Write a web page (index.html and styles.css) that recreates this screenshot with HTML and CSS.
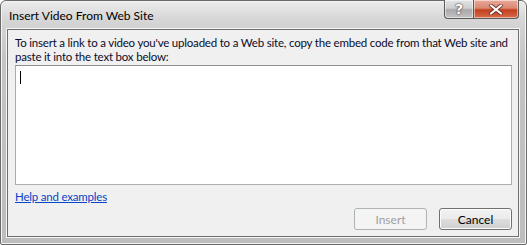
FILE: index.html
```html
<!DOCTYPE html>
<html>
<head>
	<title>Insert Video From Web Site</title>
	<link rel="stylesheet" href="styles.css">
</head>
<body>
   <div class="window">
      <div class="titlebar">
         <div class="title">Insert Video From Web Site</div>
         <div class="caption">
            <div class="cap help">?</div>
            <div class="cap close">
               <svg width="14" height="11" viewBox="0 0 14 11">
                  <path d="M2 1.5 L12 9.5 M12 1.5 L2 9.5" stroke="#6b2a1e" stroke-width="3.6" stroke-linecap="round"/>
                  <path d="M2 1.5 L12 9.5 M12 1.5 L2 9.5" stroke="#fff" stroke-width="2.2" stroke-linecap="round"/>
               </svg>
            </div>
         </div>
      </div>
      <div class="client">
         <p class="intro">To insert a link to a video you've uploaded to a Web site, copy the embed code from that Web site and<br>paste it into the text box below:</p>
         <div class="codebox"><span class="caret"></span></div>
         <a class="helplink" href="#">Help and examples</a>
         <div class="buttons">
            <div class="btn disabled">Insert</div>
            <div class="btn">Cancel</div>
         </div>
      </div>
   </div>
</body>
</html>
```

FILE: styles.css
```css
html,body{
	margin: 0;
	padding: 0;
	background: #fff;
}
body{
	font-family: "Lato", "Liberation Sans", sans-serif;
	font-size: 12px;
}
.window{
	width: 527px;
	height: 245px;
	box-sizing: border-box;
	border: 1px solid #6a6a6a;
	border-radius: 6px 6px 2px 2px;
	background: linear-gradient(to bottom, #ececec 0px, #d6d6d6 18px, #c4c4c4 60px, #bdbdbd 100%);
	padding: 0 7px 7px 6px;
	display: flex;
	flex-direction: column;
	box-shadow: inset 0 0 0 1px #f4f4f4;
}
.titlebar{
	height: 28px;
	display: flex;
	justify-content: space-between;
	align-items: flex-start;
}
.title{
	margin-top: 7px;
	margin-left: 2px;
	font-size: 12px;
	color: #000;
}
.caption{
	display: flex;
	margin-top: -1px;
}
.cap{
	height: 19px;
	box-sizing: border-box;
	border: 1px solid #5a5a5a;
	border-top: none;
	display: flex;
	justify-content: center;
	align-items: center;
	box-shadow: inset 0 0 0 1px rgba(255,255,255,0.5);
}
.help{
	width: 29px;
	border-radius: 0 0 0 4px;
	border-right: none;
	background: linear-gradient(to bottom, #e4e4e4 0%, #cfcfcf 45%, #a9a9a9 55%, #c4c4c4 100%);
	color: #fff;
	font-family: "DejaVu Sans", sans-serif;
	font-weight: bold;
	font-size: 14px;
	text-shadow: 0 0 2px #333, 0 0 1px #333;
}
.close{
	width: 46px;
	border-radius: 0 0 4px 0;
	background: linear-gradient(to bottom, #e9a99b 0%, #d98873 45%, #c4401f 55%, #d46a4a 100%);
}
.client{
	flex: 1;
	background: #f0f0f0;
	border: 1px solid #6d6d6d;
	box-shadow: 0 0 0 1px #f6f6f6;
	padding: 6px 6px 0 7px;
	display: flex;
	flex-direction: column;
}
.intro{
	margin: 0;
	line-height: 14px;
	font-size: 11.5px;
	letter-spacing: -0.2px;
	white-space: nowrap;
	color: #0c0c2a;
}
.codebox{
	margin-top: 1px;
	height: 120px;
	box-sizing: border-box;
	background: #fff;
	border: 1px solid #abadb3;
	border-top-color: #8e8f8f;
	padding: 5px 0 0 4px;
}
.caret{
	display: block;
	width: 1px;
	height: 13px;
	background: #000;
}
.helplink{
	margin-top: 5px;
	font-size: 11.5px;
	letter-spacing: -0.2px;
	color: #0645c8;
	text-decoration: underline;
	align-self: flex-start;
}
.buttons{
	display: flex;
	justify-content: flex-end;
	gap: 12px;
	margin-top: 5px;
}
.btn{
	width: 73px;
	height: 22px;
	box-sizing: border-box;
	border: 1px solid #707070;
	border-radius: 3px;
	background: linear-gradient(to bottom, #f2f2f2 0%, #ebebeb 48%, #dddddd 52%, #cfcfcf 100%);
	box-shadow: inset 0 0 0 1px #fcfcfc;
	display: flex;
	justify-content: center;
	align-items: center;
	font-size: 12px;
	color: #000;
}
.btn.disabled{
	border-color: #adb2b5;
	background: #f4f4f4;
	color: #a0a0a0;
	box-shadow: none;
}
```
